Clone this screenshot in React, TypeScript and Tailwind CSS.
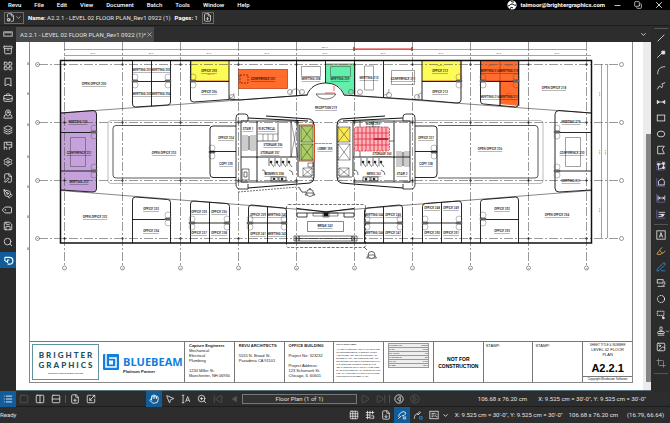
import React from "react";
import {
  Archive, LayoutGrid, Bookmark, BriefcaseBusiness, MapPinned, Layers, Settings, FilePen, PenTool, Tag,
  Save, Search, ChevronDown, X, Minus, Copy, Hand, MousePointer2, ZoomIn, SkipBack, SkipForward, Play,
  Columns2, Rows2, Square, List, FilePlus, Scaling, Grid3x3, Image, Crop, Stamp, FileDown, Highlighter,
  PenLine, FileCog,
} from "lucide-react";

type IconType = React.ComponentType<{ className?: string; strokeWidth?: number }>;

/* ---------- small drawn icons ---------- */

function glyph(children: React.ReactNode): IconType {
  return function Glyph({ className }) {
    return (
      <svg viewBox="0 0 12 12" className={className} fill="none" stroke="currentColor" strokeWidth="1">
        {children}
      </svg>
    );
  };
}

const RulerFlat = glyph(<><rect x="1" y="3.5" width="10" height="5" /><path d="M3.5 3.5v2M6 3.5v2M8.5 3.5v2" /></>);
const SpacesIcon = glyph(<path d="M1.5 10.5v-9h9v6h-3v3M1.5 7.5h3v3M4.5 1.5v3h3M7.5 4.5h3" />);
const LineIcon = glyph(<path d="M2 10 10 2" />);
const ArrowIcon = glyph(<><path d="M1.5 10.5 8 4" /><path d="M7 2.5h3.5V6H7z" fill="currentColor" /></>);
const ArcIcon = glyph(<path d="M2 11C2 5 5 2 11 2" />);
const PolylineIcon = glyph(<path d="M1.5 10 4 6l3 2 1-2.500-1-2L11 2" />);
const DimensionIcon = glyph(<><path d="M1.5 6h9" /><path d="M1.5 4v4L4 6zM10.5 4v4L8 6z" fill="currentColor" /></>);
const RectIcon = glyph(<rect x="1.5" y="2.5" width="9" height="7" />);
const EllipseIcon = glyph(<ellipse cx="6" cy="6" rx="4.5" ry="3.5" />);
const PolygonIcon = glyph(<path d="M2 1.5h8L7.5 5l2.500 5.500H2z" />);
const CountIcon = glyph(<><rect x="1" y="1" width="10" height="10" stroke="#6f62b5" strokeDasharray="2 1" /><path d="M3 10V4l6-1v5z" /><path d="M2 3h2v2H2zM8 2h2v2H8zM8 7h2v2H8z" fill="currentColor" /></>);
const AreaIcon = glyph(<><path d="M1 1v10h10" stroke="#6f62b5" /><path d="M3 9.5V5l3-2.500h2.500L10 5v4.500z" /></>);
const LengthIcon = glyph(<><path d="M1 1v10h10" stroke="#6f62b5" /><path d="M2.5 3v6M10.5 3v6M3 6h7M5 4.5 3.5 6 5 7.5M8 4.5 9.5 6 8 7.5" /></>);
const DynamicIcon = glyph(<><path d="M1 1v10h10" stroke="#6f62b5" /><path d="M3 4h8M3 6.5h6M3 9h4" /><path d="M6 6.5h4L8 9z" fill="currentColor" /></>);
const TextBoxIcon = glyph(<><rect x="1" y="1" width="10" height="10" /><path d="M4 9l2-6 2 6M4.700 7h2.600" /></>);
const CalloutIcon = glyph(<><rect x="1.5" y="2" width="7" height="4" /><path d="M2 10h8M10.5 4v4M8 8l2.500 2" /></>);
const CloudIcon = glyph(<circle cx="6" cy="6" r="4.3" strokeWidth="1.2" strokeDasharray="2.4 .6" />);
const CloudPlusIcon = glyph(<><rect x="1.5" y="1.5" width="8" height="5" strokeDasharray="2 .5" /><path d="M8 7v3h2" /><circle cx="9" cy="9.5" r="1" fill="currentColor" /></>);
const TextSelectIcon = glyph(<><path d="M1 1.5h3M1 10.5h3M2.5 1.5v9M5.5 9.5 8 3l2.500 6.500M6.300 7.500h3.400" /></>);
const SyncIcon = glyph(<><rect x="1" y="1.5" width="10" height="9" /><path d="M3 4h5M3 6h3M3 8h2M6 8l3-3M8 8h2" /></>);
const StudioIcon = glyph(<><path d="M2 2.5h5A3.500 3.500 0 0 1 7 10H5" strokeWidth="1.3" /><path d="M2 2.5V6l3 2V5.500h2" strokeWidth="1.1" /></>);
const SnapMarkupIcon = glyph(<path d="M2 8C2 5 5 2 8 2q3 0 2 3-1 2-4 2M1.500 10.500 5 7M7 8.500h4M7 10.500h4" />);
const ReuseIcon = glyph(<><path d="M1.500 10.500c0-4 2-6 4-6M5 5l3-3 1 1-3 3z" /><path d="M8 8h3v3H8z" stroke="#2f8fd8" /></>);
const SnapGridIcon = glyph(<path d="M1 3h10M1 6h5M1 9h5M3 1v10M6 1v10M9 1v4M7.500 7h3v3h-3" />);
const BackIcon = glyph(<><circle cx="6" cy="6" r="5" /><path d="M7.500 3 4 6l3.500 3z" /></>);
const ForwardIcon = glyph(<><circle cx="6" cy="6" r="5" /><path d="M4.500 3 8 6 4.500 9z" /></>);
const PrevIcon = glyph(<path d="M9 3 4 6l5 3z" fill="currentColor" />);

/* ---------- chrome ---------- */

const MENUS = ["Revu", "File", "Edit", "View", "Document", "Batch", "Tools", "Window", "Help"];

function MenuBar() {
  return (
    <header className="flex h-[10px] shrink-0 items-center bg-black pl-2 text-white">
      <nav className="flex gap-[13px] font-medium">
        {MENUS.map((m) => (
          <button key={m} className="leading-[8px]">{m}</button>
        ))}
      </nav>
      <div className="ml-auto flex items-center pr-[6px]">
        <svg viewBox="0 0 10 10" className="mr-1 size-[10px]">
          <circle cx="5" cy="5" r="4.6" fill="#fff" />
          <path d="M1 6c2 0 2-2 4-2s2 2 4 1M3 9c0-2 2-2 3-1M4 1c0 1 2 1 3 1" stroke="#000" fill="none" />
        </svg>
        <span className="text-[6px] font-bold">taimoor@brightergraphics.com</span>
        <button aria-label="Minimize" className="ml-[8px]"><Minus className="size-[9px]" strokeWidth={2} /></button>
        <button aria-label="Restore" className="ml-[12px]"><Copy className="size-[8px] -scale-x-100 rotate-90" strokeWidth={2} /></button>
        <button aria-label="Close" className="ml-[12px]"><X className="size-[10px]" strokeWidth={2} /></button>
      </div>
    </header>
  );
}

function FileBar() {
  return (
    <div className="flex h-4 shrink-0 items-center border-b border-[#1c1c1c] pl-1">
      <button aria-label="New document" className="flex h-3 w-5 items-center justify-between border border-[#6a6a6a] px-px">
        <FileCog className="size-[9px]" strokeWidth={2} />
        <ChevronDown className="size-[7px]" strokeWidth={2} />
      </button>
      <span className="ml-1 text-[6px] whitespace-nowrap"><b className="text-white">Name:</b> A2.2.1 - LEVEL 02 FLOOR PLAN_Rev1 0922 (1)</span>
      <span className="ml-1 text-[6px] whitespace-nowrap"><b className="text-white">Pages:</b> 1</span>
      <button aria-label="Page properties" className="ml-1 flex size-3 items-center justify-center border border-[#6a6a6a]">
        <FileDown className="size-[9px]" strokeWidth={2} />
      </button>
    </div>
  );
}

const PANELS: [string, IconType][] = [
  ["Measurements", RulerFlat], ["Properties", Archive], ["Thumbnails", LayoutGrid], ["Bookmarks", Bookmark],
  ["Tool Chest", BriefcaseBusiness], ["Places", MapPinned], ["Layers", Layers], ["Spaces", SpacesIcon],
  ["Settings", Settings], ["Forms", FilePen], ["Signatures", PenTool], ["Flags", Tag], ["Sets", Save], ["Search", Search],
];

function LeftRail() {
  return (
    <aside className="flex w-4 shrink-0 flex-col bg-[#2b2b2b]">
      {PANELS.map(([label, Icon]) => (
        <button key={label} aria-label={label} className="flex h-4 items-center justify-center">
          <Icon className={label === "Flags" ? "size-[10px] -rotate-45" : "size-[10px]"} strokeWidth={2} />
        </button>
      ))}
      <button aria-label="Studio" className="mt-[2px] flex h-4 items-center justify-center bg-[#125d99] text-white">
        <StudioIcon className="size-[11px]" />
      </button>
    </aside>
  );
}

const DRAW_TOOLS: [string, IconType][] = [
  ["Line", LineIcon], ["Arrow", ArrowIcon], ["Arc", ArcIcon], ["Polyline", PolylineIcon], ["Dimension", DimensionIcon],
  ["Rectangle", RectIcon], ["Ellipse", EllipseIcon], ["Polygon", PolygonIcon], ["Count", CountIcon],
  ["Area", AreaIcon], ["Length", LengthIcon], ["Dynamic fill", DynamicIcon],
];
const NOTE_TOOLS: [string, IconType, string][] = [
  ["Text box", TextBoxIcon, ""], ["Highlight", Highlighter, "text-[#e8b64a]"], ["Pen", PenLine, "text-[#2f8fd8]"],
  ["Callout", CalloutIcon, ""], ["Cloud", CloudIcon, ""], ["Cloud+", CloudPlusIcon, ""], ["Stamp", Stamp, ""],
  ["Image", Image, ""], ["Crop", Crop, "text-[#8a8a8a]"],
];

function RightRail() {
  return (
    <aside className="flex w-[19px] shrink-0 flex-col items-center bg-[#2b2b2b] pt-[2px]">
      <hr className="w-[14px] border-[#555]" />
      <div className="flex flex-col pt-px">
        {DRAW_TOOLS.map(([label, Icon]) => (
          <button key={label} aria-label={label} className="flex h-4 items-center justify-center">
            <Icon className="size-[10px]" />
          </button>
        ))}
      </div>
      <hr className="my-[2px] w-[14px] border-[#555]" />
      {NOTE_TOOLS.map(([label, Icon, tone]) => (
        <button key={label} aria-label={label} className={"relative flex h-4 w-full items-center justify-center " + tone}>
          <Icon className="size-[10px]" strokeWidth={2} />
          {label === "Stamp" && <ChevronDown className="absolute right-0 size-[5px]" strokeWidth={3} />}
        </button>
      ))}
      <hr className="mt-[2px] w-[14px] border-[#555]" />
    </aside>
  );
}

/* ---------- floor plan ---------- */

const COLS = [64, 122, 180, 238, 296, 354, 412, 470, 528, 586];
const ROWS = [64, 122, 180, 238];

const LABELS: [number, number, string][] = [
  [94, 85, "OPEN OFFICE 200"], [142, 71, "MEETING 201"], [161, 71, "MEETING 202"], [142, 95, "MEETING 203"],
  [161, 95, "MEETING 204"], [209, 72, "OFFICE 205"], [209, 93, "OFFICE 206"], [263, 80, "CONFERENCE 207"],
  [311, 80, "MEETING 208"], [340, 80, "MEETING 209"], [369, 79, "MEETING 210"], [403, 80, "CONFERENCE 211"],
  [440, 72, "OFFICE 212"], [440, 93, "OFFICE 213"], [490, 72, "MEETING 214"], [509, 72, "MEETING 215"],
  [490, 98, "MEETING 216"], [509, 98, "MEETING 217"], [554, 89, "OPEN OFFICE 218"], [326, 109, "RECEPTION 219"],
  [78, 123, "MEETING 220"], [79, 154, "CONFERENCE 221"], [79, 183, "MEETING 222"], [164, 154, "OPEN OFFICE 223"],
  [226, 139, "OFFICE 224"], [226, 165, "COPY 225"], [490, 150, "OPEN OFFICE 226"], [426, 139, "OFFICE 227"],
  [426, 165, "COPY 228"], [571, 123, "MEETING 229"], [572, 154, "CONFERENCE 230"], [571, 182, "MEETING 231"],
  [95, 218, "OPEN OFFICE 232"], [151, 210, "OFFICE 233"], [151, 232, "OFFICE 234"], [199, 213, "OFFICE 235"],
  [219, 213, "OFFICE 236"], [199, 234, "OFFICE 237"], [219, 234, "OFFICE 238"], [258, 216, "OFFICE 239"],
  [277, 216, "MEETING 240"], [258, 235, "OFFICE 241"], [277, 235, "MEETING 242"], [325, 227, "BREAK 243"],
  [374, 216, "MEETING 244"], [393, 216, "OFFICE 245"], [374, 234, "MEETING 246"], [393, 234, "OFFICE 247"],
  [432, 209, "OFFICE 248"], [451, 209, "OFFICE 249"], [432, 234, "OFFICE 250"], [451, 234, "OFFICE 251"],
  [502, 210, "OFFICE 252"], [502, 232, "OFFICE 253"], [557, 216, "OPEN OFFICE 254"], [325, 150, "LOBBY 255"],
  [248, 130, "STAIR 1"], [267, 130, "ELECTRICAL"], [273, 146, "STORAGE 256"], [270, 154, "STORAGE 257"],
  [274, 175, "WOMEN'S 258"], [373, 125, "WORK 259"], [382, 155, "STORAGE 260"], [374, 175, "MEN'S 261"],
  [402, 175, "STAIR 2"],
];

function DoorPair({ x, y }: { x: number; y: number }) {
  return (
    <g stroke="#555" strokeWidth=".4" fill="none">
      <circle cx={x} cy={y - 4} r="3" />
      <circle cx={x} cy={y + 4} r="3" />
      <rect x={x - 3} y={y - 1} width="6" height="2" fill="#666" />
    </g>
  );
}

function Cross({ x, y, w, h, fill = "none" }: { x: number; y: number; w: number; h: number; fill?: string }) {
  return (
    <g strokeWidth=".5" stroke="#333">
      <rect x={x} y={y} width={w} height={h} fill={fill} />
      <path d={`M${x} ${y}l${w} ${h}M${x + w} ${y}l${-w} ${h}`} />
    </g>
  );
}

/* Half of the service core; the other half is its mirror image. */
function CoreShell() {
  return (
    <g fill="none" stroke="#111">
      <path d="M248 121v-4q0-3-3-3h-6q-3 0-3 4v66q0 5 4 5h8v-5" strokeWidth=".8" />
      <path d="M237 121h11M237 182h11" strokeWidth=".5" />
      <path d="M248 118 308 121M266 116l44 3q4 1 4 6v52q0 5-4 6l-62 5" strokeWidth="1" />
      <path d="M241 121h57M241 182h57M241 121v61" strokeWidth=".8" />
      <path d="M298 121v56M257 121v37M241 157h57M257 157v25" strokeWidth=".9" />
      <path d="M291 121v36M299 177h13M278 121v20h-21" strokeWidth=".6" />
      <path d="M310 121q3 1 3 5v50q0 5-4 5" strokeWidth=".5" strokeDasharray="2 1" />
    </g>
  );
}

function Stairs({ x, y }: { x: number; y: number }) {
  return (
    <g stroke="#333" strokeWidth=".5">
      {[0, 2, 4, 6, 8, 10, 12, 14].map((d) => <path key={d} d={`M${x} ${y + d}h6M${x + 8} ${y + d}h6`} />)}
      <path d={`M${x + 7} ${y}v14`} strokeWidth="1" />
    </g>
  );
}

function Restroom({ x }: { x: number }) {
  return (
    <g stroke="#111" strokeWidth=".6" fill="none">
      {[0, 6, 12, 18].map((d) => (
        <g key={d}>
          <path d={`M${x + d} 158v8M${x + d + 2} 163l3 4`} />
          <circle cx={x + d + 2} cy="162" r="1" fill="#111" />
        </g>
      ))}
      <rect x={x + 2} y="177" width="7" height="4" />
      <rect x={x + 10} y="177" width="7" height="4" />
      <circle cx={x + 5} cy="179" r="1" fill="#111" />
      <circle cx={x + 13} cy="179" r="1" fill="#111" />
      <path d={`M${x - 7} 170q4 0 4 5M${x + 20} 170q4 1 4 5`} />
    </g>
  );
}

function FloorPlan() {
  return (
    <svg
      viewBox="30 42 602 299"
      className="block w-full overflow-visible"
      role="img"
      aria-label="Level 02 floor plan"
      fill="none"
      stroke="#111"
    >
      {/* highlighted rooms */}
      <g stroke="none">
        <path d="M61 113 94 110.500 96.500 113v77L94 192l-33-2z" fill="#c5a2dc" />
        <rect x="191" y="61" width="38" height="20" fill="#fdfb58" />
        <rect x="422" y="61" width="39" height="20" fill="#fdfb58" />
        <path d="M481 61h38v45l-19-2V81h-19z" fill="#ff6c2c" />
        <path d="M326 64h29v30h-11q-4-11-18-11z" fill="#62efab" />
      </g>
      <g stroke="#c4401c" strokeWidth=".8">
        <path d="M191 61v20h38M422 81h39V61M481 61v20h38M500 61v45M519 61v45" />
        <rect x="238.5" y="69.5" width="49" height="19" fill="#ff6c2c" />
        <rect x="240" y="75" width="8" height="8" strokeDasharray="2 1" stroke="#732000" />
        <path d="M326 64h29v31" stroke="#d0603a" />
      </g>

      {/* dimension strings */}
      <path d="M64 49.500h522M64 55.500h527M601.500 64v174M607.500 64v174" stroke="#666" strokeWidth=".6" />
      <path d="M354 49h58" stroke="#e02020" />
      <path d="M354 47v4M412 47v4" stroke="#e02020" strokeWidth="1.5" />
      <g fill="#333" stroke="none" fontSize="2" textAnchor="middle" fontFamily="Liberation Sans, sans-serif">
        {COLS.slice(0, -1).map((c) => <text key={c} x={c + 29} y="54">30'-0"</text>)}
        <text x="325" y="48">270'-0"</text>
        {ROWS.slice(0, -1).map((r) => (
          <text key={r} x="600" y={r + 30} transform={`rotate(-90 600 ${r + 30})`}>30'-0"</text>
        ))}
        <text x="606" y="152" transform="rotate(-90 606 152)">90'-0"</text>
      </g>

      {/* structural grid */}
      <g stroke="#555" strokeWidth=".6">
        {COLS.map((c, i) => (
          <g key={c}>
            <path d={`M${c + 0.5} 42v224`} strokeDasharray="9 2 2 2" />
            <circle cx={c + 0.5} cy="268" r="2" />
            <text x={c + 0.5} y="269" fontSize="2" textAnchor="middle" fill="#333" stroke="none">{i + 1}</text>
            {ROWS.map((r) => <circle key={r} cx={c + 0.5} cy={r + 0.5} r=".9" fill="#111" />)}
          </g>
        ))}
        {ROWS.map((r, i) => (
          <g key={r}>
            <path d={`M39 ${r + 0.5}h580`} strokeDasharray="9 2 2 2" />
            <circle cx="37.5" cy={r + 0.5} r="2" />
            <circle cx="621.5" cy={r + 0.5} r="2" />
            <text x="37.5" y={r + 1} fontSize="2" textAnchor="middle" fill="#333" stroke="none">{"ABCD"[i]}</text>
          </g>
        ))}
      </g>

      {/* sheet edge marks */}
      <g stroke="#888" strokeWidth=".8">
        {[64, 94, 125, 157, 187, 217, 249].map((y) => <path key={y} d={`M27 ${y}h3M28 ${y - 2}v3`} />)}
      </g>

      {/* outer walls and sloped corridors */}
      <rect x="60.5" y="60.5" width="531" height="182.5" strokeWidth="1.5" />
      <path d="M61 113 308 95M344 95 591 113M61 190.500 326 211.500 591 190.500" strokeWidth=".5" />
      <path d="M239 100 307 95C310 87 317 83 325.500 83S341 87 344 95L422 100" strokeWidth=".9" />
      <path d="M316 94h20q-3 5-10 5t-10-5z" fill="#fff" strokeWidth=".6" />
      <path d="M325 93h10M334 86v5" stroke="#e04040" strokeWidth=".8" />

      {/* perimeter rooms */}
      <g strokeWidth=".9">
        <path d="M61 113 93 110.500q3.500 0 3.500 3.500v75q0 3-3.500 3L61 190M61 132.500h35M61 171h35" />
        <path d="M591 113l-32-2.500q-4 0-4 4V188q0 4 4 4l32-2M555 132.500h36M555 171h36" />
        <path d="M132.500 61v43q0 3 3 3l32-2q3 0 3-3V61M151.500 61v45M132.500 81.500h38" />
        <path d="M190.500 61v38q0 3 3 3L229 99.500V61M229 99l10 1M190.500 81.500H229" />
        <path d="M296.500 61v35M325.500 61v22M354.500 61v34M383.500 61v36M422 61v39l35 3q4 0 4-3V61M422 81.500h39" />
        <path d="M480.500 61v40q0 3 3 3l32 3q3 0 3-3V61M500 81v25M480.500 81.500H519" />
        <path d="M132.500 243v-43q0-3 3-3l32 2.500q3 0 3 3V243M132.500 219.500h38" />
        <path d="M190.500 243v-39q0-3 3-3l33 2.500q3 0 3 3V243M209.500 202v41M190.500 223h39" />
        <path d="M248.500 243v-35q0-3 3-3l32 3q3 0 3 3v32M267.500 207v36M248.500 223h38" />
        <path d="M402.500 243v-35q0-3-3-3l-32 3q-3 0-3 3v32M383.500 207v36M402.500 223h-38" />
        <path d="M461.500 243v-39q0-3-3-3l-33 2.500q-3 0-3 3V243M441.500 202v41M461.500 223h-39" />
        <path d="M518.500 243v-43q0-3-3-3l-32 2.500q-3 0-3 3V243M518.500 219.500h-38" />
      </g>
      <g strokeWidth=".5" stroke="#444">
        <path d="M70.500 137.500h15v29h-15zM565.500 137.500h15v29h-15zM301.500 66.500h19v10h-19zM330.500 66.500h20v10h-20zM364.500 66h9v24h-9zM391.500 70.500h23v14h-23z" />
        <path d="M229 98q5 0 5-5M230 100h5M291 94q0-5 5-5M300 95q0-6-4-6M384 95q5 0 5-6M418 98q0-5 4-5" />
        <circle cx="232" cy="97" r="2.500" /><circle cx="290" cy="92" r="2.500" /><circle cx="302" cy="92" r="2.500" />
        <circle cx="351" cy="92" r="2.500" /><circle cx="360" cy="92" r="2.500" /><circle cx="389" cy="95" r="2.500" /><circle cx="417" cy="97" r="2.500" />
      </g>
      {[[135, 81], [168, 81], [193, 81], [459, 81], [483, 81], [516, 81], [94, 132], [94, 171], [557, 132], [557, 171],
        [168, 219], [192, 223], [227, 223], [250, 223], [284, 223], [367, 223], [400, 223], [425, 223], [459, 223],
        [483, 219], [212, 152], [434, 152]].map(([x, y]) => <DoorPair key={`${x}-${y}`} x={x} y={y} />)}

      {/* open offices beside the cores */}
      <path
        d="M236 120.500H111q-3 0-3 3v57q0 3 3 3h125M415 120.500h125q3 0 3 3v57q0 3-3 3H415"
        stroke="#777" strokeWidth=".5"
      />
      <path d="M210 125.500h-94q-3 0-3 3V175q0 3 3 3h94M438 125.500h97q3 0 3 3V175q0 3-3 3h-97" strokeWidth=".7" />
      <path d="M236 126h-23q-3 0-3 3v45q0 3.500 3 3.500h23M210 151.500h26M415 126h19q3 0 3 3v45q0 3.500-3 3.500h-19M437 151.500h-22" strokeWidth=".9" />

      {/* service cores */}
      <CoreShell />
      <g transform="translate(651 0) scale(-1 1)"><CoreShell /></g>
      <Stairs x={242} y={136} />
      <Stairs x={396} y={152} />
      <path d="M258 134h20M263 134v7M268 134v7M273 134v7M291 121l7 36M298 121l-7 36" strokeWidth=".4" />
      <path d="M242 169h7v11h-7zM244 172h3v5h-3z" strokeWidth=".6" />
      <rect x="299.5" y="125" width="15" height="36" fill="#cfe69b" stroke="#d05030" />
      <Cross x={301} y={126} w={12} h={16} fill="#a9cf62" />
      <Cross x={301} y={144} w={12} h={16} fill="#a9cf62" />
      <Cross x={303} y={168} w={9} h={8} />
      <path d="M308 163h5v4h-5z" strokeWidth=".5" />
      <Cross x={338} y={127} w={12} h={15} fill="#fbe94e" />
      <Cross x={338} y={144} w={12} h={16} />
      <Cross x={339} y={168} w={10} h={8} />
      <Restroom x={269} />
      <Restroom x={361} />
      <rect x="354.5" y="127" width="35" height="24" rx="2" fill="#ffb3ba" stroke="#e03040" strokeWidth=".8" strokeDasharray="2 1" />
      {[358, 362, 366, 370, 374, 378, 382, 386].map((x) => <path key={x} d={`M${x} 127v24`} stroke="#d42a3a" strokeWidth=".8" />)}
      <path d="M355 133h34M355 139h34M355 145h34" stroke="#e03040" strokeWidth=".8" />
      <path d="M374 139h14" stroke="#b01020" strokeWidth="1.5" />
      <path d="M315 143.500h17" stroke="#e08a20" strokeWidth="1.2" strokeDasharray="3 .5" />
      <path d="M238 192l60-5 4 5h4" strokeDasharray="2 1" strokeWidth=".6" />

      {/* break room */}
      <rect x="286.5" y="204.5" width="79" height="43" rx="2" strokeWidth=".6" strokeDasharray="3 1.5" />
      <path d="M297 208.500 326 212l28-3.500" strokeWidth="1" />
      <path d="M297 213h57M297 213v4h10v-4M344 213v4h10v-4" strokeWidth=".8" />
      <path d="M313 213h25v3h-25zM323 212h6v5h-6z" strokeWidth=".5" />
      <path d="M324 213h4v3h-4z" fill="#111" strokeWidth=".5" />
      <path d="M307.500 221.500h36v10h-36z" strokeWidth=".5" />
      <path d="M299 236h53v5h-53zM294 236h5v5h-5zM352 236h5v5h-5zM296 236v5M354 236v5M299 238.500h53" strokeWidth=".6" />
      <g strokeWidth=".6" fill="#fff">
        <path d="M306 192h-4l-3-5M367 250l-3-3" />
        <path d="m305 195 5-7 5 7zM366.500 258l5-7 5 7z" />
        <circle cx="310" cy="193" r="3.500" />
        <circle cx="371.5" cy="255" r="3.500" />
        <path d="M307 193h6M368 255h7" />
      </g>

      <g
        fill="#111" stroke="none" fontSize="3" fontWeight="500" textAnchor="middle" textDecoration="underline"
        fontFamily="Roboto, sans-serif"
      >
        {LABELS.map(([x, y, t]) => <text key={t} x={x} y={y}>{t}</text>)}
      </g>
      <g fill="#d03010" stroke="none" fontSize="2" textAnchor="middle" fontFamily="Liberation Sans, sans-serif">
        <text x="210" y="75">AREA 2</text><text x="440" y="66">AREA 3</text>
        <text x="490" y="66">AREA 4</text><text x="509" y="66">AREA 5</text><text x="509" y="94">AREA 6</text>
      </g>
    </svg>
  );
}

/* ---------- title block ---------- */

function Cell({ children, className = "px-[4px]" }: { children?: React.ReactNode; className?: string }) {
  return <div className={"overflow-hidden border-l border-[#777] pt-px " + className}>{children}</div>;
}

function TitleBlock() {
  return (
    <div className="grid h-[41px] grid-cols-[154px_repeat(9,minmax(0,1fr))] border-t border-[#777] font-['Liberation_Sans',sans-serif] text-[4px] leading-[5px] text-[#222]">
      <div className="flex items-center pl-[2px]">
        <div className="flex h-9 w-[67px] flex-col items-center justify-center border border-[#5e939f] font-['Lato',sans-serif] font-black text-[#1d5263]">
          <span className="pl-[2px] text-[8px] leading-[10px] tracking-[2px]">BRIGHTER</span>
          <span className="pl-[2px] text-[8px] leading-[10px] tracking-[2px]">GRAPHICS</span>
          <span className="mt-[2px] text-[2px] leading-[3px]">CUSTOM INNOVATIVE BIM AND VDC</span>
        </div>
        <svg viewBox="0 0 16 16" className="ml-1 size-4">
          <rect width="16" height="16" rx="1" fill="#0f7fe0" />
          <path d="M3 0v13h10V4H6" stroke="#fff" strokeWidth="1.5" fill="none" />
          <rect x="6" y="6.5" width="4" height="4" fill="#fff" />
        </svg>
        <div className="ml-1 flex flex-col pt-[4px]">
          <span className="font-['Open_Sans',sans-serif] text-[11px] leading-[15px] font-bold text-[#0f7fe0]">BLUEBEAM</span>
          <span className="text-[4px] leading-[5px] font-bold">Platinum Partner</span>
        </div>
      </div>
      <Cell>
        <b>Capture Engineers</b><br />Mechanical<br />Electrical<br />Plumbing<br /><br />1234 Miller St.<br />
        <span className="whitespace-nowrap">Manchester, NH 06930</span>
      </Cell>
      <Cell><b>REVU ARCHITECTS</b><br /><br />5555 N. Broad St.<br />Pasadena CA 91101</Cell>
      <Cell><b>OFFICE BUILDING</b><br /><br />Project No: 323232<br /><br />Project Address:<br />123 Schonsett St.<br />Chicago, IL 60601</Cell>
      <Cell className="px-[2px] text-[2px] leading-[3px]">
        <b>LEGAL DISCLAIMER</b>
        <p className="pt-[2px]">
          ALL IDEAS, DESIGNS, AND PLANS INDICATED OR REPRESENTED BY THESE DRAWINGS ARE OWNED AND ARE THE PROPERTY OF
          BLUEBEAM, INC. AND WERE CREATED AND DEVELOPED FOR USE IN CONNECTION WITH THE SPECIFIED PROJECT. NONE OF THE
          IDEAS, DESIGNS OR PLANS SHALL BE USED BY OR DISCLOSED TO ANY PERSON OR FIRM FOR ANY PURPOSE WITHOUT THE WRITTEN
          PERMISSION OF BLUEBEAM, INC.
        </p>
      </Cell>
      <Cell className="px-[4px] text-[2px] leading-[3px]">
        <table className="w-full">
          <tbody>
            {[["PROJECT NO", "323232"], ["DATE", "09/22"], ["DRAWN BY", "TM"], ["CHECKED BY", "BG"], ["SCALE", "1:100"], ["SHEET", "A2.2.1"]].map(([k, v]) => (
              <tr key={k} className="border border-[#999] bg-[#eeeeee]"><td>{k}</td><td className="text-right">{v}</td></tr>
            ))}
          </tbody>
        </table>
      </Cell>
      <Cell className="flex items-center justify-center text-center text-[5px] leading-[7px] font-bold text-black">NOT FOR<br />CONSTRUCTION</Cell>
      <Cell className="px-[2px]">STAMP:</Cell>
      <Cell className="px-[2px]">STAMP:</Cell>
      <Cell className="flex flex-col text-center">
        <span className="text-[3px] leading-[4px]">SHEET TITLE &amp; NUMBER</span>
        <span>LEVEL 02 FLOOR<br />PLAN</span>
        <span className="pt-[4px] text-[11px] leading-[14px] font-bold text-black">A2.2.1</span>
        <span className="mt-auto border-t border-[#777] text-[3px] leading-[5px]">Copyright Bluebeam Software</span>
      </Cell>
    </div>
  );
}

function Workspace() {
  return (
    <main className="flex min-w-0 flex-1 flex-col">
      <div className="flex h-4 shrink-0 items-end bg-[#2d2d2d]">
        <div className="flex h-[15px] w-[138px] items-center justify-between bg-[#4a4a4a] pr-px pl-1">
          <button className="text-[6px] whitespace-nowrap">A2.2.1 - LEVEL 02 FLOOR PLAN_Rev1 0922 (1)*</button>
          <button aria-label="Close tab"><X className="size-[7px]" strokeWidth={2} /></button>
        </div>
        <button aria-label="Tab list" className="mr-1 mb-1 ml-auto"><ChevronDown className="size-[7px]" strokeWidth={3} /></button>
      </div>
      <div className="flex min-h-0 flex-1 overflow-hidden border-b border-[#54717f] bg-white">
        <div className="min-w-0 flex-1 pr-[10px] pl-[13px]">
          <div className="border-x border-b border-[#888]">
            <FloorPlan />
            <TitleBlock />
          </div>
        </div>
        <div className="flex w-2 flex-col bg-[#ececec] pt-[92px] pb-2 pl-[3px]">
          <div className="flex-1 bg-[#858585]" />
        </div>
      </div>
    </main>
  );
}

/* ---------- bottom bars ---------- */

function BarButton({ label, icon: Icon, active, dim }: { label: string; icon: IconType; active?: boolean; dim?: boolean }) {
  return (
    <button
      aria-label={label}
      className={"flex h-4 w-4 shrink-0 items-center justify-center " + (active ? "bg-[#125d99] text-white" : dim ? "text-[#555]" : "")}
    >
      <Icon className="size-[10px]" strokeWidth={2} />
    </button>
  );
}

function NavBar() {
  return (
    <div className="flex h-4 shrink-0 items-center border-b border-[#1c1c1c]">
      <BarButton label="Markups list" icon={List} active />
      <BarButton label="Single view" icon={Square} dim />
      <BarButton label="Split vertical" icon={Columns2} />
      <BarButton label="Split horizontal" icon={Rows2} />
      <i className="mx-px h-2 w-px bg-[#555]" />
      <BarButton label="Fit page" icon={FilePlus} />
      <BarButton label="Fit width" icon={Scaling} />
      <div className="ml-[47px] flex">
        <BarButton label="Pan" icon={Hand} active />
        <BarButton label="Select" icon={MousePointer2} />
        <BarButton label="Select text" icon={TextSelectIcon} />
        <BarButton label="Zoom" icon={ZoomIn} />
        <BarButton label="First page" icon={SkipBack} dim />
        <BarButton label="Previous page" icon={PrevIcon} dim />
      </div>
      <input
        aria-label="Page"
        defaultValue="Floor Plan (1 of 1)"
        className="h-[10px] w-[115px] border border-[#777] bg-[#333] text-center text-[6px] leading-[8px]"
      />
      <BarButton label="Next page" icon={Play} dim />
      <BarButton label="Last page" icon={SkipForward} dim />
      <i className="mr-px h-2 w-px bg-[#555]" />
      <BarButton label="Previous view" icon={BackIcon} />
      <BarButton label="Next view" icon={ForwardIcon} dim />
      <div className="ml-auto flex gap-[11px] pr-6 text-[6px] whitespace-nowrap">
        <span>106.68 x 76.20 cm</span>
        <span>X: 9.525 cm = 30'-0", Y: 9.525 cm = 30'-0"</span>
      </div>
    </div>
  );
}

function StatusBar() {
  return (
    <footer className="flex h-4 shrink-0 items-center">
      <span className="text-[6px]">Ready</span>
      <div className="ml-auto flex items-center">
        <BarButton label="Show grid" icon={Grid3x3} />
        <BarButton label="Snap to grid" icon={SnapGridIcon} />
        <BarButton label="Snap to content" icon={FileDown} />
        <BarButton label="Snap to markup" icon={SnapMarkupIcon} active />
        <BarButton label="Reuse" icon={ReuseIcon} />
        <BarButton label="Sync" icon={SyncIcon} />
        <button aria-label="More"><ChevronDown className="size-[7px]" strokeWidth={3} /></button>
      </div>
      <div className="flex gap-[6px] pr-[6px] pl-[6px] text-[6px] whitespace-nowrap">
        <span>X: 9.525 cm = 30'-0", Y: 9.525 cm = 30'-0"</span>
        <span>106.68 x 76.20 cm</span>
        <span className="pl-[3px]">(16.79, 66.64)</span>
      </div>
    </footer>
  );
}

export default function App() {
  return (
    <div className="flex h-screen flex-col overflow-hidden bg-[#2d2d2d] font-['Roboto',sans-serif] text-[6px] leading-[8px] text-[#e2e2e2]">
      <MenuBar />
      <FileBar />
      <div className="flex min-h-0 flex-1">
        <LeftRail />
        <Workspace />
        <RightRail />
      </div>
      <NavBar />
      <StatusBar />
    </div>
  );
}
